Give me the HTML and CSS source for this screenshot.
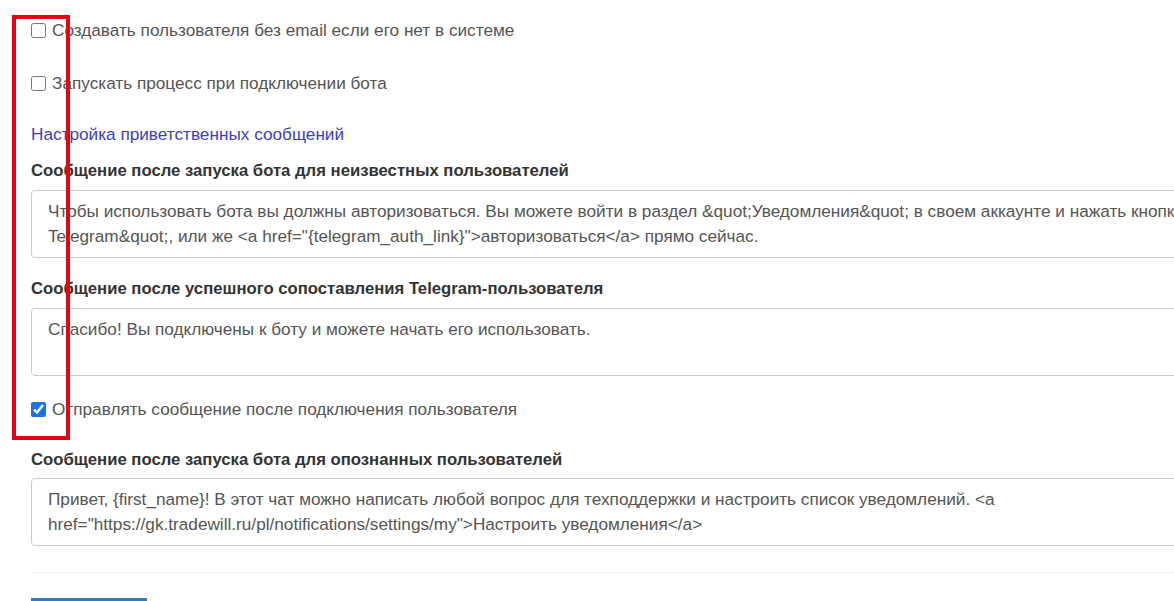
FILE: index.html
```html
<!DOCTYPE html>
<html lang="ru">
<head>
    <meta charset="UTF-8">
    <meta name="viewport" content="width=device-width, initial-scale=1.0">
    <title>Настройки Telegram-бота</title>
    <link rel="stylesheet" href="styles.css">
</head>
<body>
    <div class="settings">
        <label class="check-row">
            <input type="checkbox" name="create_without_email">
            Создавать пользователя без email если его нет в системе
        </label>

        <label class="check-row check-row-second">
            <input type="checkbox" name="start_process">
            Запускать процесс при подключении бота
        </label>

        <a href="#" class="section-link">Настройка приветственных сообщений</a>

        <div class="form-group">
            <label for="msgUnknown">Сообщение после запуска бота для неизвестных пользователей</label>
            <textarea id="msgUnknown" rows="2">Чтобы использовать бота вы должны авторизоваться. Вы можете войти в раздел &amp;quot;Уведомления&amp;quot; в своем аккаунте и нажать кнопку &amp;quot;Подключить Telegram&amp;quot;, или же &lt;a href="{telegram_auth_link}"&gt;авторизоваться&lt;/a&gt; прямо сейчас.</textarea>
        </div>

        <div class="form-group">
            <label for="msgLinked">Сообщение после успешного сопоставления Telegram-пользователя</label>
            <textarea id="msgLinked" rows="2">Спасибо! Вы подключены к боту и можете начать его использовать.</textarea>
        </div>

        <label class="check-row check-row-third">
            <input type="checkbox" name="send_after_link" checked>
            Отправлять сообщение после подключения пользователя
        </label>

        <div class="form-group form-group-last">
            <label for="msgKnown">Сообщение после запуска бота для опознанных пользователей</label>
            <textarea id="msgKnown" rows="2">Привет, {first_name}! В этот чат можно написать любой вопрос для техподдержки и настроить список уведомлений. &lt;a href="https://gk.tradewill.ru/pl/notifications/settings/my"&gt;Настроить уведомления&lt;/a&gt;</textarea>
        </div>

        <hr class="divider">

        <button type="submit" class="save-btn">Сохранить</button>
    </div>

    <!-- highlight frame over the checkboxes -->
    <div class="highlight"></div>
</body>
</html>
```

FILE: styles.css
```css
* {
    margin: 0;
    padding: 0;
    box-sizing: border-box;
}

body {
    background-color: #fff;
    font-family: 'Liberation Sans', Arial, sans-serif;
    font-size: 17.2px;
    color: #555;
    overflow: hidden;
}

.settings {
    width: 1460px;
    padding: 20px 0 0 31px;
}

.check-row {
    display: flex;
    align-items: center;
    height: 20px;
    line-height: 20px;
    color: #555;
}

.check-row input {
    width: 15px;
    height: 15px;
    margin: 0 6px 0 0;
    accent-color: #1a73e8;
}

.check-row-second {
    margin-top: 33px;
}

.check-row-third {
    margin-top: 23px;
}

.section-link {
    display: block;
    margin-top: 31px;
    line-height: 20px;
    color: #3d3dcc;
    text-decoration: none;
}

.form-group {
    margin-top: 17px;
    width: 1400px;
}

.form-group + .form-group {
    margin-top: 21px;
}

.form-group-last {
    margin-top: 31px;
}

.form-group label {
    display: block;
    line-height: 20px;
    margin-bottom: 9px;
    font-size: 16.7px;
    font-weight: 700;
    color: #333;
}

.form-group textarea {
    display: block;
    width: 100%;
    height: 68px;
    padding: 8px 16px;
    border: 1px solid #ccc;
    border-radius: 4px;
    font-family: inherit;
    font-size: 17.2px;
    line-height: 25px;
    color: #555;
    resize: none;
    overflow: hidden;
}

.form-group-last textarea {
    margin-top: -1px;
}

.divider {
    width: 1400px;
    margin-top: 26px;
    border: none;
    border-top: 1px solid #eee;
}

.save-btn {
    display: block;
    margin-top: 25px;
    width: 116px;
    height: 40px;
    padding-top: 16px;
    background-color: #337ab7;
    color: #fff;
    border: none;
    border-radius: 0;
    font-family: inherit;
    font-size: 16px;
    line-height: 20px;
}

.highlight {
    position: absolute;
    left: 12px;
    top: 15px;
    width: 58px;
    height: 425px;
    border: 4px solid #e30613;
}
```
